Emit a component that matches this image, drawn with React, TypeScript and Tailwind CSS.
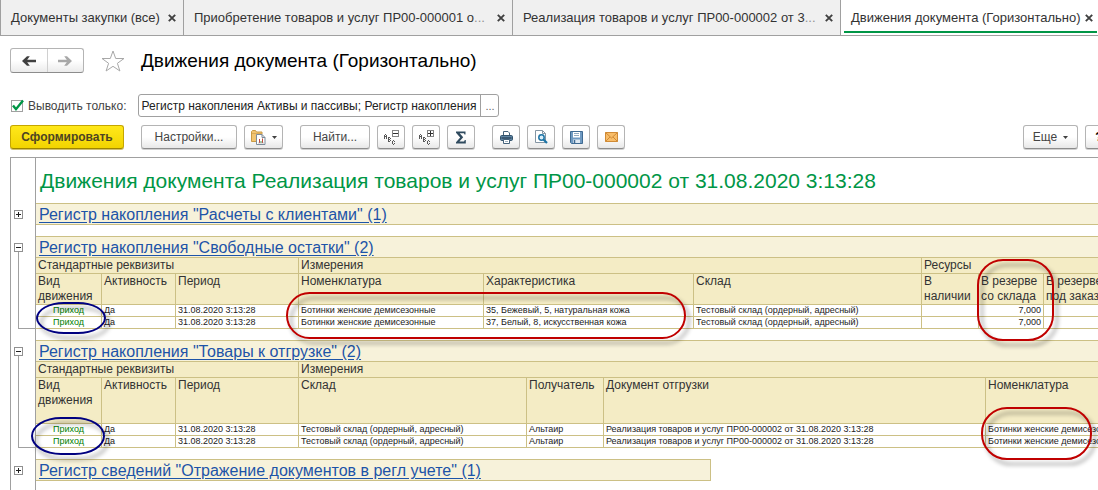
import { Fragment, type ReactNode } from "react"
import clsx from "clsx"

const tabs = [
    { title: "Документы закупки (все)", cut: false, width: "w-[184px] border-l pl-[10px]" },
    { title: "Приобретение товаров и услуг ПР00-000001 о", cut: true, width: "w-[329px] pl-[10px]" },
    { title: "Реализация товаров и услуг ПР00-000002 от 3", cut: true, width: "w-[328px] pl-[10px]" },
]

interface Column {
    title: string[]
    width?: string
    align?: string
}

interface Group {
    title: string
    span: number
}

interface Register {
    title: string
    groups: Group[]
    columns: Column[]
    headHeight: string
    rows: string[][]
}

const freeStock: Register = {
    title: 'Регистр накопления "Свободные остатки" (2)',
    groups: [
        { title: "Стандартные реквизиты", span: 3 },
        { title: "Измерения", span: 3 },
        { title: "Ресурсы", span: 3 },
    ],
    columns: [
        { title: ["Вид", "движения"], width: "w-[66px]", align: "text-center text-[#008000]" },
        { title: ["Активность"], width: "w-[74px]" },
        { title: ["Период"], width: "w-[123px]" },
        { title: ["Номенклатура"], width: "w-[185px]" },
        { title: ["Характеристика"], width: "w-[210px]" },
        { title: ["Склад"], width: "w-[228px]" },
        { title: ["В", "наличии"], width: "w-[57px]" },
        { title: ["В резерве", "со склада"], width: "w-[65px]", align: "text-right" },
        { title: ["В резерве", "под заказ"] },
    ],
    headHeight: "h-[31px]",
    rows: [
        ["Приход", "Да", "31.08.2020 3:13:28", "Ботинки женские демисезонные", "35, Бежевый, 5, натуральная кожа", "Тестовый склад (ордерный, адресный)", "", "7,000", ""],
        ["Приход", "Да", "31.08.2020 3:13:28", "Ботинки женские демисезонные", "37, Белый, 8, искусственная кожа", "Тестовый склад (ордерный, адресный)", "", "7,000", ""],
    ],
}

const toShip: Register = {
    title: 'Регистр накопления "Товары к отгрузке" (2)',
    groups: [
        { title: "Стандартные реквизиты", span: 3 },
        { title: "Измерения", span: 4 },
    ],
    columns: [
        { title: ["Вид", "движения"], width: "w-[66px]", align: "text-center text-[#008000]" },
        { title: ["Активность"], width: "w-[74px]" },
        { title: ["Период"], width: "w-[123px]" },
        { title: ["Склад"], width: "w-[228px]" },
        { title: ["Получатель"], width: "w-[77px]" },
        { title: ["Документ отгрузки"], width: "w-[382px]" },
        { title: ["Номенклатура"] },
    ],
    headHeight: "h-[46px]",
    rows: [
        ["Приход", "Да", "31.08.2020 3:13:28", "Тестовый склад (ордерный, адресный)", "Альтаир", "Реализация товаров и услуг ПР00-000002 от 31.08.2020 3:13:28", "Ботинки женские демисезонные"],
        ["Приход", "Да", "31.08.2020 3:13:28", "Тестовый склад (ордерный, адресный)", "Альтаир", "Реализация товаров и услуг ПР00-000002 от 31.08.2020 3:13:28", "Ботинки женские демисезонные"],
    ],
}

function CloseButton({ title }: { title: string }) {
    return (
        <button type="button" aria-label={`Закрыть: ${title}`} className="shrink-0">
            <svg width="8" height="8" viewBox="0 0 8 8" stroke="#404040" strokeWidth="1.9">
                <path d="M0.8 0.8 7.2 7.2M7.2 0.8 0.8 7.2" />
            </svg>
        </button>
    )
}

function TabBar() {
    return (
        <nav className="flex h-9 text-[13px] leading-4">
            {tabs.map((tab) => (
                <div
                    key={tab.title}
                    className={clsx("flex shrink-0 items-center justify-between border-r border-b border-[#a0a0a0] bg-[#f0f0f0] pr-[7px]", tab.width)}
                >
                    <a href="#" className="whitespace-nowrap">
                        {tab.title}
                        {tab.cut && <span className="text-[#909090]">...</span>}
                    </a>
                    <CloseButton title={tab.title} />
                </div>
            ))}
            <div className="flex min-w-0 flex-1 flex-col border-b border-[#a0a0a0] pl-[3px]">
                <div className="flex flex-1 items-center justify-between pt-1 pr-[5px] pl-[7px]">
                    <a href="#" aria-current="page" className="whitespace-nowrap">
                        Движения документа (Горизонтально)
                    </a>
                    <CloseButton title="Движения документа" />
                </div>
                <div className="mr-px mb-[2px] h-[2px] bg-[#009646]" />
            </div>
        </nav>
    )
}

function ToolButton({ label, className, children }: { label?: string; className: string; children: ReactNode }) {
    return (
        <button
            type="button"
            aria-label={label}
            className={clsx(
                "flex h-6 shrink-0 items-center justify-center rounded-[3px] border border-[#b4b4b4] border-b-[#8c8c8c] bg-linear-to-b from-white from-50% to-[#e8e8e8] shadow-[0_1px_0_#d0d0d0]",
                className,
            )}
        >
            {children}
        </button>
    )
}

function Caret() {
    return (
        <svg width="5" height="3" viewBox="0 0 5 3" fill="#404040">
            <path d="M0 0h5L2.5 3z" />
        </svg>
    )
}

function Arrow({ color, flip }: { color: string; flip?: boolean }) {
    return (
        <svg width="14" height="10" viewBox="0 0 14 10" fill={color} className={clsx(flip && "-scale-x-100")}>
            <path d="M0 5 5 0.2h2.8L5.200 3.700H14v2.600H5.200L7.800 9.800H5z" />
        </svg>
    )
}

function PasteIcon() {
    return (
        <svg width="15" height="15" viewBox="0 0 15 15">
            <path d="M0.5 11.5v-10l1-1h3l1 1.500h5.500v2.500h-5v7z" fill="#f2c572" stroke="#c99a45" />
            <path d="M1 3.500h10" stroke="#d9aa58" />
            <path d="M5.500 4.500h5.500l3 3v7H5.500z" fill="#fff" stroke="#7d8b99" />
            <path d="M11 4.500v3h3" fill="none" stroke="#7d8b99" />
            <path d="M8.500 9v4M11.500 8.500v4.500" stroke="#c04a3c" />
            <path d="M10 11v2" stroke="#4b9c55" />
            <path d="M7 13h6" stroke="#9b9b9b" strokeWidth="0.6" />
        </svg>
    )
}

// Группировки: лесенка из трех знаков и знак свёртки в углу
function LevelsIcon({ plus }: { plus?: boolean }) {
    return (
        <svg width="15" height="15" viewBox="0 0 15 15" fill="#585858" shapeRendering="crispEdges">
            <path d="M8 0h7v7H8zM9 1v5h5V1z" fillRule="evenodd" fill="#858585" />
            <path d="M9 3h5v1H9z" fill="#303030" />
            {plus && <path d="M11 1h1v5h-1z" fill="#303030" />}
            <path d="M1 4h1v1H1zM0 5h1v4H0zM2 5h1v4H2zM1 6h1v1H1z" />
            <path d="M4 7h1v5H4zM5 7h1v1H5zM5 9h1v1H5zM5 11h1v1H5zM6 8h1v1H6zM6 10h1v1H6z" />
            <path d="M8 11h1v3H8zM9 10h1v1H9zM9 14h1v1H9zM10 11h1v1h-1zM10 13h1v1h-1z" />
        </svg>
    )
}

function SigmaIcon() {
    return (
        <svg width="12" height="13" viewBox="0 0 12 13" fill="#2f4a5e">
            <path d="M1 0.500h9.500v3h-1l-.5-1.200H4.700l3.500 4-3.800 4.200h4.700l.7-1.500h1v3.500H1v-1.200l4.200-4.700L1 1.800z" />
        </svg>
    )
}

function PrinterIcon() {
    return (
        <svg width="13" height="13" viewBox="0 0 13 13">
            <path d="M3.500 4.500v-4h4.500l1.500 1.500v2.500" fill="#fff" stroke="#45637c" />
            <rect x="0.500" y="4.500" width="12" height="5" rx="1.200" fill="#5f86a5" stroke="#34536c" />
            <path d="M1.500 7h10" stroke="#243d52" strokeWidth="1.200" />
            <path d="M3.500 8.500h6v4h-6z" fill="#fff" stroke="#45637c" />
            <path d="M5 10.500h3" stroke="#9fb2c1" />
        </svg>
    )
}

function PreviewIcon() {
    return (
        <svg width="14" height="14" viewBox="0 0 14 14" fill="none">
            <path d="M1.500 0.500h7l3 3v9h-10z" fill="#fff" stroke="#8495a3" />
            <path d="M8.500 0.500v3h3" stroke="#8495a3" />
            <circle cx="7.500" cy="7.500" r="2.700" fill="#d9edf8" stroke="#1c74a6" strokeWidth="1.500" />
            <path d="M9.500 9.500 13 13" stroke="#1c74a6" strokeWidth="2.200" />
        </svg>
    )
}

function SaveIcon() {
    return (
        <svg width="13" height="13" viewBox="0 0 13 13">
            <path d="M0.500 0.500h12v12h-11l-1-1z" fill="#6f9ac2" stroke="#3f6a92" />
            <path d="M3 1h7v5.500H3z" fill="#fff" />
            <path d="M4 2.500h5M4 4.500h5" stroke="#8fa9c0" />
            <path d="M3 8.500h7V12H3z" fill="#dfe9f2" />
            <path d="M4.500 9v3" stroke="#3f6a92" strokeWidth="1.500" />
        </svg>
    )
}

function MailIcon() {
    return (
        <svg width="13" height="10" viewBox="0 0 13 10" fill="none" stroke="#d08a35">
            <path d="M0.500 0.500h12v9H0.500z" fill="#f8bd69" />
            <path d="m0.500 9.500 4.500-4.500M12.500 9.500 8 5M0.500 0.500l6 5.500 6-5.500" />
        </svg>
    )
}

function Toolbar() {
    return (
        <div className="mt-2 flex overflow-hidden pb-px pl-[10px] text-[12px] text-[#444]">
            <button
                type="button"
                className="h-6 w-[114px] shrink-0 rounded-[3px] border border-[#c5a600] border-b-[#9e8500] bg-linear-to-b from-[#ffe819] to-[#f2d400] font-bold text-[#4d4522] shadow-[0_1px_0_#d0c070]"
            >
                Сформировать
            </button>
            <ToolButton className="ml-[17px] w-24">Настройки...</ToolButton>
            <ToolButton label="Варианты отчета" className="ml-[7px] w-[39px] gap-[6px]">
                <PasteIcon />
                <Caret />
            </ToolButton>
            <ToolButton className="ml-[17px] w-[70px]">Найти...</ToolButton>
            <div className="ml-[7px] flex gap-[7px]">
                <ToolButton label="Свернуть группы" className="w-7">
                    <LevelsIcon />
                </ToolButton>
                <ToolButton label="Развернуть группы" className="w-7">
                    <LevelsIcon plus />
                </ToolButton>
                <ToolButton label="Сумма" className="w-7">
                    <SigmaIcon />
                </ToolButton>
            </div>
            <div className="ml-[17px] flex gap-[7px]">
                <ToolButton label="Печать" className="w-7">
                    <PrinterIcon />
                </ToolButton>
                <ToolButton label="Предварительный просмотр" className="w-7">
                    <PreviewIcon />
                </ToolButton>
                <ToolButton label="Сохранить" className="w-7">
                    <SaveIcon />
                </ToolButton>
                <ToolButton label="Отправить по почте" className="w-7">
                    <MailIcon />
                </ToolButton>
            </div>
            <div className="-mr-[15px] ml-auto flex gap-[7px]">
                <ToolButton className="w-[55px] gap-[6px]">
                    Еще
                    <Caret />
                </ToolButton>
                <ToolButton className="w-7 font-bold text-black">?</ToolButton>
            </div>
        </div>
    )
}

function Section({ title, open, children }: { title: string; open?: boolean; children: ReactNode }) {
    return (
        <section className="flex">
            <div className="flex w-6 shrink-0 flex-col pt-[7px]">
                <button
                    type="button"
                    aria-expanded={!!open}
                    aria-label={title}
                    className="ml-[3px] flex size-[9px] shrink-0 items-center justify-center border border-[#909090] bg-white"
                >
                    <svg width="5" height="5" viewBox="0 0 5 5" stroke="#202020" shapeRendering="crispEdges">
                        <path d={open ? "M0 2.500h5" : "M0 2.500h5M2.500 0v5"} />
                    </svg>
                </button>
                {open && <div className="ml-[7px] flex-1 border-b border-l border-[#a0a0a0]" />}
            </div>
            <div className="min-w-0 flex-1 border-l border-[#a0a0a0]">{children}</div>
        </section>
    )
}

function SectionLink({ title, className }: { title: string; className?: string }) {
    return (
        <h2 className={clsx("h-[22px] border-y border-[#ccc085] bg-[#f7f2da] pl-[3px] text-[16px] leading-[22px]", className)}>
            <a href="#" className="whitespace-nowrap text-[#1d54a8] underline underline-offset-2">
                {title}
            </a>
        </h2>
    )
}

function RegisterTable({ register }: { register: Register }) {
    return (
        <table className="w-full table-fixed border-separate border-spacing-0 text-left">
            <colgroup>
                {register.columns.map((column, i) => (
                    <col key={i} className={column.width} />
                ))}
            </colgroup>
            <thead className="bg-[#f4ecc5] text-[12px] leading-[15px] text-[#333]">
                <tr className="h-4">
                    {register.groups.map((group) => (
                        <th
                            key={group.title}
                            colSpan={group.span}
                            className="border-r border-b border-[#ccc085] p-0 pl-[2px] font-normal last:border-r-0"
                        >
                            {group.title}
                        </th>
                    ))}
                </tr>
                <tr className={register.headHeight}>
                    {register.columns.map((column, i) => (
                        <th
                            key={i}
                            className="overflow-hidden border-r border-b border-[#ccc085] p-0 pl-[2px] align-top font-normal whitespace-nowrap last:border-r-0"
                        >
                            {column.title.map((line, n) => (
                                <Fragment key={line}>
                                    {n > 0 && <br />}
                                    {line}
                                </Fragment>
                            ))}
                        </th>
                    ))}
                </tr>
            </thead>
            <tbody className="text-[9px] leading-[11px] text-[#222]">
                {register.rows.map((row, r) => (
                    <tr key={r} className="h-3">
                        {row.map((value, i) => (
                            <td
                                key={i}
                                className={clsx(
                                    "overflow-hidden border-r border-b border-[#ccc085] px-[2px] py-0 whitespace-nowrap last:border-r-0",
                                    register.columns[i].align,
                                )}
                            >
                                {value}
                            </td>
                        ))}
                    </tr>
                ))}
            </tbody>
        </table>
    )
}

function Spacer() {
    return <div className="ml-6 h-[11px] border-l border-[#a0a0a0]" />
}

// Обводка поверх отчета
function Mark({ className }: { className: string }) {
    return <div className={clsx("pointer-events-none absolute drop-shadow-[4px_5px_2px_rgba(0,0,0,0.4)]", className)} />
}

function Report() {
    return (
        <main className="relative mt-[7px] ml-[10px] flex-1 overflow-hidden border-t border-l border-[#a0a0a0]">
            <div className="ml-6 h-[45px] border-l border-[#a0a0a0] pl-1">
                <h1 className="text-[21px] leading-[46px] whitespace-nowrap text-[#009646]">
                    Движения документа Реализация товаров и услуг ПР00-000002 от 31.08.2020 3:13:28
                </h1>
            </div>
            <Section title="Расчеты с клиентами">
                <SectionLink title={'Регистр накопления "Расчеты с клиентами" (1)'} />
            </Section>
            <Spacer />
            <Section title="Свободные остатки" open>
                <SectionLink title={freeStock.title} />
                <RegisterTable register={freeStock} />
            </Section>
            <Spacer />
            <Section title="Товары к отгрузке" open>
                <SectionLink title={toShip.title} />
                <RegisterTable register={toShip} />
            </Section>
            <Spacer />
            <Section title="Отражение документов в регл учете">
                <SectionLink title={'Регистр сведений "Отражение документов в регл учете" (1)'} className="w-[675px] border-r" />
            </Section>
            <div className="ml-6 h-full border-l border-[#a0a0a0]" />

            <Mark className="top-[144px] left-[25px] h-8 w-[70px] rounded-[28px/16px] border-2 border-[#000080]" />
            <Mark className="top-[259px] left-5 h-[38px] w-[74px] rounded-[30px/19px] border-2 border-[#000080]" />
            <Mark className="top-[134px] left-[275px] h-[47px] w-[400px] rounded-[24px] border-2 border-[#c00000]" />
            <Mark className="top-[101px] left-[966px] h-[82px] w-[77px] rounded-[26px] border-2 border-[#c00000]" />
            <Mark className="top-[249px] left-[970px] h-[53px] w-[111px] rounded-[26px] border-2 border-[#c00000]" />
        </main>
    )
}

export default function App() {
    return (
        <div className="flex h-screen flex-col overflow-hidden bg-white font-['Liberation_Sans',Arial,sans-serif] text-[#333]">
            <TabBar />
            <header className="mt-3 flex items-center pl-[10px]">
                <div className="flex h-[25px] w-[74px] rounded-[3px] border border-[#b4b4b4] border-b-[#8c8c8c] bg-linear-to-b from-white from-50% to-[#ebebeb]">
                    <button type="button" aria-label="Назад" className="flex flex-1 items-center justify-center border-r border-[#d0d0d0]">
                        <Arrow color="#404040" />
                    </button>
                    <button type="button" aria-label="Вперед" className="flex flex-1 items-center justify-center">
                        <Arrow color="#a8a8a8" flip />
                    </button>
                </div>
                <button type="button" aria-label="В избранное" className="ml-[17px]">
                    <svg width="24" height="22" viewBox="0 0 24 22" fill="none" stroke="#a8a8a8">
                        <path d="m12 1 2.700 7.500H23l-6.600 4.800 2.500 7.700-6.900-4.700L5.100 21l2.500-7.700L1 8.500h8.300z" />
                    </svg>
                </button>
                <h1 className="ml-4 pt-px text-[19px] leading-6 text-black">Движения документа (Горизонтально)</h1>
            </header>
            <div className="mt-[21px] flex items-center pl-[11px]">
                <label className="flex items-center gap-[5px] text-[12px] text-[#444]">
                    <span className="relative flex">
                        <input type="checkbox" defaultChecked className="peer size-3 appearance-none border border-[#a0a0a0] bg-white" />
                        <svg
                            width="13"
                            height="13"
                            viewBox="0 0 13 13"
                            className="pointer-events-none absolute bottom-0 left-0 hidden peer-checked:block"
                            fill="none"
                            stroke="#009646"
                            strokeWidth="2.400"
                        >
                            <path d="m2 6.500 3 3.700L12 1.500" />
                        </svg>
                    </span>
                    Выводить только:
                </label>
                <div className="ml-3 flex h-[23px] w-[361px] rounded-[3px] border border-[#a0a0a0] bg-white">
                    <input
                        type="text"
                        aria-label="Выводить только регистры"
                        defaultValue="Регистр накопления Активы и пассивы; Регистр накопления"
                        className="min-w-0 flex-1 pl-[2px] text-[12px] text-[#222]"
                    />
                    <button type="button" aria-label="Выбрать" className="w-[18px] border-l border-[#a0a0a0] text-[11px] leading-4 text-[#666]">
                        ...
                    </button>
                </div>
            </div>
            <Toolbar />
            <Report />
        </div>
    )
}
